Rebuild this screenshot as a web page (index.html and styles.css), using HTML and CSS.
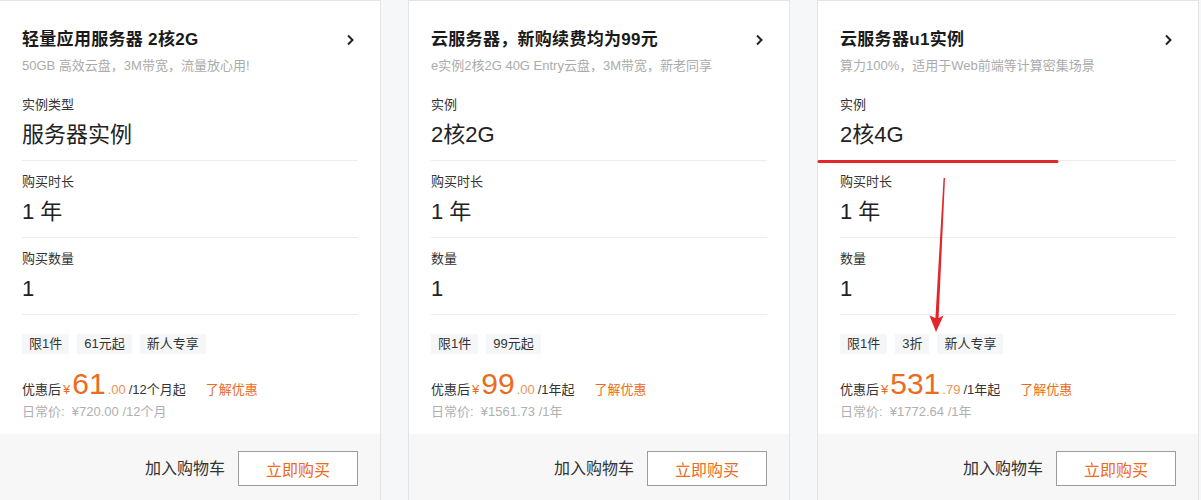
FILE: index.html
```html
<!DOCTYPE html>
<html lang="zh-CN">
<head>
    <meta charset="UTF-8">
    <meta name="viewport" content="width=device-width, initial-scale=1.0">
    <title>云产品推荐</title>
    <link rel="stylesheet" href="styles.css">
</head>
<body>

<div class="page">
    <div class="cards">

        <div class="card">
            <div class="card-body">
                <div class="card-head">
                    <div>
                        <div class="title">轻量应用服务器 2核2G</div>
                        <div class="subtitle">50GB 高效云盘，3M带宽，流量放心用!</div>
                    </div>
                    <svg class="chevron" width="8" height="12" viewBox="0 0 8 12"><path d="M2 1.5 L6.5 6 L2 10.5" fill="none" stroke="#222" stroke-width="2"/></svg>
                </div>
                <div class="field">
                    <div class="label">实例类型</div>
                    <div class="value">服务器实例</div>
                </div>
                <div class="field">
                    <div class="label">购买时长</div>
                    <div class="value">1 年</div>
                </div>
                <div class="field">
                    <div class="label">购买数量</div>
                    <div class="value">1</div>
                </div>
                <div class="tags">
                    <span class="tag">限1件</span>
                    <span class="tag">61元起</span>
                    <span class="tag">新人专享</span>
                </div>
                <div class="price-row">
                    <span class="price-label">优惠后</span>
                    <span class="yen">¥</span>
                    <span class="price">61</span>
                    <span class="cents">.00</span>
                    <span class="unit">/12个月起</span>
                    <a class="more" href="#">了解优惠</a>
                </div>
                <div class="regular">日常价:  ¥720.00 /12个月</div>
            </div>
            <div class="card-foot">
                <span class="cart">加入购物车</span>
                <button class="buy">立即购买</button>
            </div>
        </div>

        <div class="card">
            <div class="card-body">
                <div class="card-head">
                    <div>
                        <div class="title">云服务器，新购续费均为99元</div>
                        <div class="subtitle">e实例2核2G 40G Entry云盘，3M带宽，新老同享</div>
                    </div>
                    <svg class="chevron" width="8" height="12" viewBox="0 0 8 12"><path d="M2 1.5 L6.5 6 L2 10.5" fill="none" stroke="#222" stroke-width="2"/></svg>
                </div>
                <div class="field">
                    <div class="label">实例</div>
                    <div class="value">2核2G</div>
                </div>
                <div class="field">
                    <div class="label">购买时长</div>
                    <div class="value">1 年</div>
                </div>
                <div class="field">
                    <div class="label">数量</div>
                    <div class="value">1</div>
                </div>
                <div class="tags">
                    <span class="tag">限1件</span>
                    <span class="tag">99元起</span>
                </div>
                <div class="price-row">
                    <span class="price-label">优惠后</span>
                    <span class="yen">¥</span>
                    <span class="price">99</span>
                    <span class="cents">.00</span>
                    <span class="unit">/1年起</span>
                    <a class="more" href="#">了解优惠</a>
                </div>
                <div class="regular">日常价:  ¥1561.73 /1年</div>
            </div>
            <div class="card-foot">
                <span class="cart">加入购物车</span>
                <button class="buy">立即购买</button>
            </div>
        </div>

        <div class="card">
            <div class="card-body">
                <div class="card-head">
                    <div>
                        <div class="title">云服务器u1实例</div>
                        <div class="subtitle">算力100%，适用于Web前端等计算密集场景</div>
                    </div>
                    <svg class="chevron" width="8" height="12" viewBox="0 0 8 12"><path d="M2 1.5 L6.5 6 L2 10.5" fill="none" stroke="#222" stroke-width="2"/></svg>
                </div>
                <div class="field">
                    <div class="label">实例</div>
                    <div class="value">2核4G</div>
                </div>
                <div class="field">
                    <div class="label">购买时长</div>
                    <div class="value">1 年</div>
                </div>
                <div class="field">
                    <div class="label">数量</div>
                    <div class="value">1</div>
                </div>
                <div class="tags">
                    <span class="tag">限1件</span>
                    <span class="tag">3折</span>
                    <span class="tag">新人专享</span>
                </div>
                <div class="price-row">
                    <span class="price-label">优惠后</span>
                    <span class="yen">¥</span>
                    <span class="price">531</span>
                    <span class="cents">.79</span>
                    <span class="unit">/1年起</span>
                    <a class="more" href="#">了解优惠</a>
                </div>
                <div class="regular">日常价:  ¥1772.64 /1年</div>
            </div>
            <div class="card-foot">
                <span class="cart">加入购物车</span>
                <button class="buy">立即购买</button>
            </div>
        </div>

    </div>

    <!-- red markup drawn over the third card -->
    <svg class="markup" width="1201" height="500" viewBox="0 0 1201 500">
        <line x1="819" y1="161.5" x2="1057" y2="161.5" stroke="#e3262a" stroke-width="3" stroke-linecap="round"/>
        <path d="M943.6 178 L945 178 L938.6 318 L943.5 315.5 L936 332 L929.5 315.5 L935.4 318 Z" fill="#e3262a"/>
    </svg>
</div>

</body>
</html>
```

FILE: styles.css
```css
body {
    margin: 0;
    font-family: "Liberation Sans", "Noto Sans CJK SC", sans-serif;
    background-color: #f6f7f9;
    color: #333;
    overflow: hidden;
}
.page {
    position: relative;
    width: 1201px;
    height: 500px;
    overflow: hidden;
}
.cards {
    display: flex;
    gap: 27px;
    margin-left: -1px;
}
.card {
    flex: none;
    width: 382px;
    box-sizing: border-box;
    height: 540px;
    background: white;
    border: 1px solid #e4e4e4;
    display: flex;
    flex-direction: column;
}
.card-body {
    padding: 27px 22px 13px 22px;
}
.card-head {
    display: flex;
    justify-content: space-between;
    align-items: flex-start;
    margin-bottom: 9px;
}
.title {
    font-size: 17px;
    font-weight: bold;
    line-height: 24px;
    letter-spacing: 0.3px;
    color: #1a1a1a;
}
.subtitle {
    margin-top: 5px;
    font-size: 13px;
    line-height: 18px;
    color: #ababab;
}
.chevron {
    margin-top: 6px;
    margin-right: 4px;
}
.field {
    padding: 11px 0 10px 0;
    border-bottom: 1px solid #ececec;
}
.label {
    font-size: 13px;
    line-height: 20px;
    color: #333;
}
.value {
    margin-top: 5px;
    font-size: 22px;
    line-height: 30px;
    color: #222;
}
.tags {
    display: flex;
    gap: 8px;
    margin-top: 19px;
}
.tag {
    height: 20px;
    line-height: 20px;
    padding: 0 7px;
    font-size: 13px;
    background-color: #f5f6f7;
    color: #333;
}
.price-row {
    display: flex;
    align-items: baseline;
    margin-top: 12px;
    height: 36px;
    line-height: 36px;
    font-size: 13px;
}
.price-label {
    color: #333;
}
.yen {
    margin-left: 2px;
    color: #ec6b1c;
}
.price {
    margin-left: 2px;
    font-size: 30px;
    color: #ec6b1c;
}
.cents {
    margin-left: 2px;
    color: #f0925a;
}
.unit {
    margin-left: 3px;
    color: #333;
}
.more {
    margin-left: 20px;
    color: #ec6b1c;
    text-decoration: none;
}
.regular {
    margin-top: 1px;
    font-size: 13px;
    line-height: 18px;
    color: #b0b0b0;
    white-space: pre;
}
.card-foot {
    flex: 1;
    background-color: #f7f7f8;
    display: flex;
    justify-content: flex-end;
    align-items: flex-start;
    gap: 13px;
    padding: 17px 22px 0 22px;
}
.cart {
    font-size: 16px;
    line-height: 35px;
    color: #333;
}
.buy {
    width: 120px;
    height: 35px;
    font-family: inherit;
    font-size: 16px;
    color: #ec6b1c;
    background: white;
    border: 1px solid #9c9c9c;
    cursor: pointer;
}
.markup {
    position: absolute;
    left: 0;
    top: 0;
    pointer-events: none;
}
```
